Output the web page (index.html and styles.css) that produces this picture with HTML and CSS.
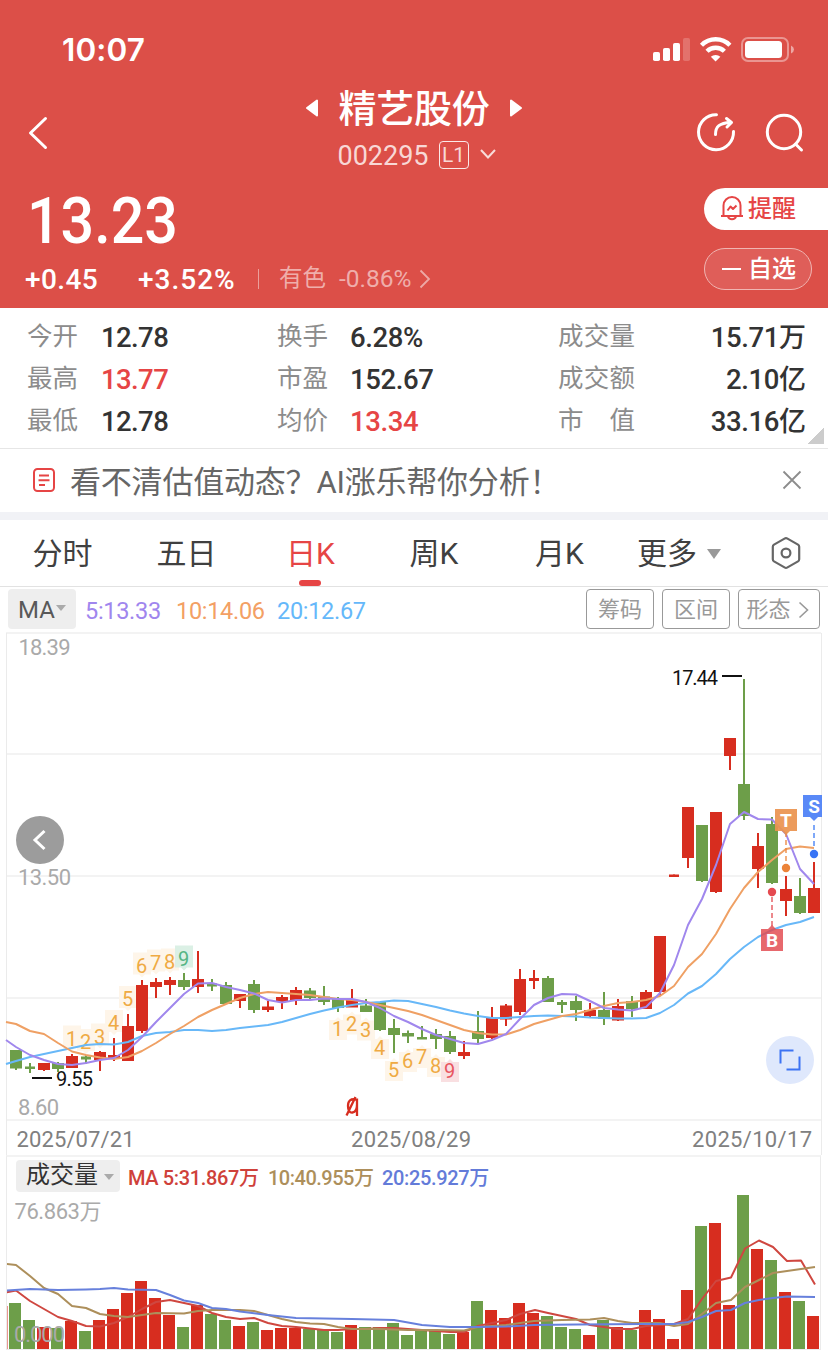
FILE: index.html
```html
<!DOCTYPE html>
<html lang="zh-CN">
<head>
<meta charset="utf-8">
<title>精艺股份 002295</title>
<link rel="stylesheet" href="styles.css">
</head>
<body>
<header class="hero">
  <div class="status">
    <span class="clock">10:07</span>
    <svg class="status-icons" width="144" height="28" viewBox="652 36 144 28">
      <g fill="#fff"><rect x="653" y="52" width="7" height="9" rx="1.8"/><rect x="663" y="48" width="7" height="13" rx="1.8"/><rect x="673" y="43" width="7" height="18" rx="1.8"/><rect x="683" y="38" width="7" height="23" rx="1.8" opacity=".2"/></g>
      <g fill="none" stroke="#fff" stroke-width="4.4"><path d="M701.5 45.2a20 20 0 0 1 28.400 0"/><path d="M707 51.300a12.400 12.400 0 0 1 17.400 0"/></g>
      <path d="M710.800 56.800a7.300 7.300 0 0 1 9.600 0L715.600 61.500z" fill="#fff"/>
      <rect x="742" y="38" width="46" height="23" rx="6" fill="none" stroke="#fff" stroke-opacity=".4" stroke-width="2"/>
      <rect x="745" y="41" width="37" height="17" rx="3.500" fill="#fff"/><path d="M791 45.500q3 1.500 3 4t-3 4z" fill="#fff" opacity=".5"/>
    </svg>
  </div>
  <div class="nav">
    <svg class="back" width="24" height="36" viewBox="28 115 24 36"><path d="M46.500 118.500L31.500 133L46.500 147.500" fill="none" stroke="#fff" stroke-width="3" stroke-linecap="round" stroke-linejoin="round"/></svg>
    <div class="name">
      <div class="name-line">
        <svg width="12" height="18" viewBox="0 0 12 18"><path d="M11 1.500v15L1 9z" fill="#fff" stroke="#fff" stroke-width="2" stroke-linejoin="round"/></svg>
        <h1>精艺股份</h1>
        <svg width="12" height="18" viewBox="0 0 12 18"><path d="M1 1.500v15L11 9z" fill="#fff" stroke="#fff" stroke-width="2" stroke-linejoin="round"/></svg>
      </div>
      <div class="code-line"><span class="code">002295</span><span class="level">L1</span>
        <svg width="16" height="12" viewBox="0 0 16 12"><path d="M1 2l7 7.500L15 2" fill="none" stroke="#f8dcda" stroke-width="2"/></svg></div>
    </div>
    <svg class="tools" width="108" height="42" viewBox="696 112 108 42" fill="none" stroke="#fff" stroke-width="3" stroke-linecap="round" stroke-linejoin="round">
      <path d="M716.500 114.700A17.500 17.500 0 1 0 733.500 131.500"/><path d="M715.500 134.500c0-8 4-11.500 15-12M726.500 118.500l5 4-4.500 4.500"/>
      <circle cx="784" cy="132" r="16.700"/><path d="M795.500 144l6 6"/>
    </svg>
  </div>
  <div class="quote">
    <div class="quote-main">
      <div class="price"><span>13.23</span></div>
      <div class="changes"><b class="chg">+0.45</b><b class="pct">+3.52%</b><i></i><span class="sector">有色</span><span class="sector-pct">-0.86%</span>
        <svg width="12" height="20" viewBox="0 0 12 20"><path d="M1.500 1.500L10 10L1.500 18.500" fill="none" stroke="#eda9a6" stroke-width="1.800"/></svg></div>
    </div>
    <div class="actions">
      <div class="alert"><svg width="24" height="26" viewBox="0 0 24 26" fill="none" stroke="#e64545" stroke-width="2" stroke-linejoin="round"><path d="M1 21h22M3.500 21V10.500a8.500 8.500 0 0 1 17 0V21M8 21.500c1 3.600 7 3.600 8 0"/><path d="M7.500 15.500l3-4 2.500 2.500 3.500-3.500"/></svg><span>提醒</span></div>
      <div class="watch"><i></i><span>自选</span></div>
    </div>
  </div>
</header>

<section class="stats">
  <dl><dt>今开</dt><dd>12.78</dd><dt>最高</dt><dd class="up">13.77</dd><dt>最低</dt><dd>12.78</dd></dl>
  <dl><dt>换手</dt><dd>6.28%</dd><dt>市盈</dt><dd>152.67</dd><dt>均价</dt><dd class="up">13.34</dd></dl>
  <dl class="last"><dt>成交量</dt><dd>15.71<em>万</em></dd><dt>成交额</dt><dd>2.10<em>亿</em></dd><dt>市　值</dt><dd>33.16<em>亿</em></dd></dl>
  <span class="corner"></span>
</section>

<section class="notice">
  <svg width="24" height="26" viewBox="0 0 24 26" fill="none" stroke="#e64545" stroke-width="2"><rect x="2" y="2" width="20" height="22" rx="3.500"/><path d="M7 8.500h10M6.500 13.200h11M7 18h6"/></svg>
  <span>看不清估值动态？AI涨乐帮你分析！</span>
  <svg class="close" width="20" height="20" viewBox="0 0 20 20"><path d="M1.500 1.500l17 17M18.500 1.500l-17 17" stroke="#8c8c8c" stroke-width="1.800"/></svg>
</section>

<nav class="tabs">
  <span>分时</span><span>五日</span><span class="active">日K</span><span>周K</span><span>月K</span><span class="more">更多<i class="caret"></i></span>
  <svg width="32" height="34" viewBox="0 0 32 34" fill="none" stroke="#666" stroke-width="2.200" stroke-linejoin="round"><path d="M14.500 2.600q1.500-.8 3 0L28 8.600q1.200.8 1.200 2.200v12.400q0 1.400-1.200 2.200l-10.500 6q-1.500.8-3 0L4 25.400q-1.200-.8-1.200-2.200V10.800Q2.800 9.400 4 8.600z"/><circle cx="16" cy="17" r="4.400"/></svg>
</nav>

<div class="indicators">
  <span class="select ma">MA<i class="caret"></i></span>
  <span class="n5">5:13.33</span><span class="n10">10:14.06</span><span class="n20">20:12.67</span>
  <div class="btns"><span>筹码</span><span>区间</span><span class="wide">形态<svg width="11" height="18" viewBox="0 0 11 18"><path d="M1.500 1.500L9.500 9l-8 7.500" fill="none" stroke="#999" stroke-width="1.600"/></svg></span></div>
</div>

<svg id="kline" class="kline" width="828" height="523" viewBox="0 632 828 523"></svg>

<section class="volume">
  <div class="volume-head"><span class="select vol">成交量<i class="caret"></i></span><span class="v5">MA 5:31.867万</span><span class="v10">10:40.955万</span><span class="v20">20:25.927万</span></div>
  <svg id="vol" width="813" height="157" viewBox="7 1193 813 157"></svg>
</section>
<script src="chart.js"></script>
</body>
</html>
```
FILE: styles.css
```css
* { box-sizing: border-box; }
body { margin: 0; width: 828px; height: 1360px; overflow: hidden; background: #fff; color: #333; font-family: Roboto, "Noto Sans CJK SC", sans-serif; }
svg { display: block; flex: none; }
i { font-style: normal; }

.hero { height: 308px; background: #dc4f48; color: #fff; }
.status { height: 80px; display: flex; justify-content: space-between; padding: 30px 32px 0 62px; }
.clock { font: 600 31.5px/40px Inter, sans-serif; letter-spacing: .1px; }
.status-icons { margin-top: 6px; }
.nav { height: 100px; display: flex; justify-content: space-between; padding: 0 24px 0 27px; }
.back { margin: 35px 81px 0 0; }
.tools { margin-top: 32px; }
.name { display: flex; flex-direction: column; align-items: center; }
.name-line { height: 56px; display: flex; align-items: center; gap: 20px; }
.name h1 { margin: 0; font: 500 38px/52px "Noto Sans CJK SC", sans-serif; letter-spacing: -.2px; height: 56px; }
.code-line { height: 38px; display: flex; align-items: center; color: #f8d8d6; margin-left: 5px; margin-top: -1px; }
.code { font-size: 27px; line-height: 38px; padding-top: 3px; }
.level { width: 30px; height: 28px; margin: 1px 11px 0 10px; border: 1.500px solid #fbe9e8; border-radius: 4px; font-size: 21px; line-height: 27px; text-align: center; font-weight: 400; }

.quote { height: 128px; display: flex; justify-content: space-between; }
.quote-main { padding-left: 25px; }
.price { height: 80px; font-size: 65px; font-weight: 500; line-height: 83px; padding-left: 2px; }
.price span { display: inline-block; transform: scaleX(.91); transform-origin: left; }
.changes { height: 40px; display: flex; align-items: center; font-size: 28px; line-height: 40px; }
.changes b { font-weight: 500; }
.chg { width: 113px; letter-spacing: .4px; }
.pct { width: 120px; letter-spacing: 1px; }
.changes i { width: 1px; height: 20px; background: #eb9f9b; margin: -2px 20px 0 0; }
.changes .sector { color: #efaeab; font-size: 23.500px; width: 60px; line-height: 36px; height: 40px; }
.changes .sector-pct { color: #efaeab; font-size: 24.500px; width: 80px; line-height: 37px; height: 40px; }
.changes svg { margin-top: -3px; }
.actions { display: flex; flex-direction: column; gap: 18px; padding-top: 8px; width: 124px; }
.alert, .watch { height: 42px; display: flex; align-items: center; font-size: 24px; font-weight: 500; }
.alert { border-radius: 21px 0 0 21px; background: #fff; color: #e64545; gap: 4px; padding-left: 16px; }
.alert svg { margin-top: -2px; }
.alert span, .watch span { line-height: 36px; padding-bottom: 1px; }
.watch { width: 108px; border: 1.500px solid #f0b5b2; border-radius: 21px; background: #df5e59; gap: 7px; padding-left: 17px; }
.watch i { width: 19px; height: 2px; background: #fff; }

.stats { position: relative; height: 140px; padding: 9px 23px 0 27px; display: flex; }
.stats dl { margin: 0; display: grid; grid-template-columns: 74px 176px; grid-auto-rows: 42px; }
.stats dl + dl { grid-template-columns: 73px 208px; }
.stats dl.last { grid-template-columns: 80px 168px; }
.stats dt { color: #8c8c8c; font-size: 25.500px; line-height: 39px; white-space: nowrap; }
.stats dd { margin: 0; color: #333; font-size: 27.500px; line-height: 42px; font-weight: 500; letter-spacing: -.6px; }
.stats dl + dl dd { letter-spacing: -.4px; }
.stats .last dt { letter-spacing: .3px; }
.stats .last dd { text-align: right; }
.stats em { font-style: normal; font-size: 27px; letter-spacing: 0; }
.stats .up { color: #e64545; }
.corner { position: absolute; right: 4px; bottom: 4px; width: 16px; height: 16px; background: linear-gradient(135deg, transparent 50%, #ccc 50%); }

.notice { height: 72px; display: flex; align-items: center; padding: 0 26px 2px 32px; border-top: 1px solid #e6e6e6; border-bottom: 8px solid #f1f2f6; color: #666; }
.notice span { margin-left: 14px; font-size: 31px; letter-spacing: -.2px; }
.notice .close { margin-left: auto; }

.tabs { height: 67px; border-bottom: 1px solid #e2e2e2; display: grid; grid-template-columns: 125px 123px 125px 122px 129px 146px 32px; font-size: 30px; line-height: 68px; color: #404040; align-items: center; text-align: center; }
.tabs span { height: 66px; }
.tabs .active { position: relative; color: #e64545; }
.active::after { content: ""; position: absolute; left: 51px; bottom: 0; width: 22px; height: 6px; border-radius: 3px; background: #e64545; }
.tabs .more { display: flex; align-items: center; gap: 10px; padding: 2px 0 0 13px; }
.caret { width: 0; height: 0; border: solid transparent; border-width: 10px 7px 0; border-top-color: #999; }

.indicators { height: 45px; display: flex; padding: 2px 8px 0; font-size: 24px; line-height: 42px; }
.select { display: flex; align-items: center; background: #eee; border-radius: 4px; color: #595959; }
.select .caret { border-width: 6px 5px 0; border-top-color: #aaa; }
.ma { width: 68px; height: 40px; padding: 2px 0 0 10px; margin-right: 9px; gap: 1px; }
.ma .caret { margin-top: -4px; }
.n5 { color: #a086ee; width: 91px; }
.n10 { color: #f3a064; width: 101px; }
.n20 { color: #65b8fa; }
.n5, .n10, .n20 { font-size: 23.500px; line-height: 44px; letter-spacing: -.3px; white-space: nowrap; }
.btns { margin-left: auto; display: flex; gap: 8px; }
.btns span { height: 40px; width: 68px; border: 1px solid #999; border-radius: 4px; color: #999; font-size: 22px; line-height: 40px; display: flex; align-items: center; justify-content: center; padding-top: 1px; }
.btns .wide { width: 82px; gap: 7px; padding-right: 3px; }

.kline { overflow: hidden; }
.volume { height: 195px; margin: 0 7px 0 6px; border: 1px solid #ebebeb; border-top: 2px solid #f3f3f3; }
.volume-head { height: 36px; padding-top: 2px; display: flex; align-items: center; font-size: 20px; font-weight: 500; letter-spacing: -.35px; white-space: nowrap; }
.vol { width: 104px; height: 32px; margin-left: 9px; margin-right: 8px; padding-left: 10px; gap: 6px; font-size: 24px; line-height: 28px; padding-bottom: 3px; font-weight: 400; letter-spacing: 0; color: #333; }
.vol .caret { margin-top: 4px; }
.v5 { color: #cf413a; width: 140px; }
.v10 { color: #ad8f5b; width: 114px; letter-spacing: -.5px; }
.v20 { color: #637bd9; }
```
FILE: chart.js
```js
const RED = '#d72d1f', GREEN = '#6d9e49';

// body top, body bottom, high, low, rising
const candles = [
  [1050,1068.500,1050,1070,0],[1066.500,1069,1063,1073,0],[1063,1070,1063,1071,1],[1063,1069,1062,1072,0],
  [1056,1068,1054,1068,1],[1056.500,1059.500,1055,1064,0],[1052,1060,1051,1071,1],[1055,1059,1038,1061,1],
  [1026,1061,1014,1061,1],[985,1031,980,1033,1],[982,987,978,998,1],[980,985,977,995,1],
  [980,987,973,990,0],[979,987,951,993,1],[983.500,986.500,979,991,0],[985,1004,982,1004,0],
  [994,1001,994,1008,1],[984,1010,980,1013,0],[1006.500,1010,1001,1012,1],[997,1002,995,1009,1],
  [990,1000,987,1005,1],[990.500,998,988,1000,0],[996.500,1002,986,1005,0],[998,1008,997,1012,0],
  [1000,1007.500,989,1007,1],[1005.500,1012,999,1012,0],[1002,1030,1002,1031,0],[1028,1035,1019,1053,0],
  [1033,1036.500,1030.500,1043,0],[1037,1039.500,1026,1039,0],[1034,1039,1029,1049,0],[1036,1052,1031,1054,0],
  [1052,1056,1041,1059,1],[1031,1039,1011,1043,0],[1018,1038,1007,1039,1],[1005.500,1019.500,1004,1026,1],
  [979,1012,969,1015,1],[978,981,970,989,1],[978,1002,976,1002,0],[1002,1005,1000,1013,0],
  [1001,1010,996,1021,0],[1010,1016,1003,1017,1],[1010,1019,992,1025,0],[1006,1020.500,999,1021,1],
  [1001,1009,996,1017,0],[992,1009,990,1009,1],[936,992,936,996,1],[874.500,877,874.500,877,1],
  [807,858,807,868,1],[825,881,825,882,0],[812,892,812,893,1],[738,756,738,770,1],
  [784,816,679,820,0],[846,869,833,888,1],[824,883,817,884,0],[889,901,876,916,1],
  [896,913,878,914,0],[888,913,862,913,1]
];

// first value sits on the left edge, the rest on the candle centres
const ma5 = [1040,1047,1055,1060,1064,1065,1063,1060,1058,1050,1037,1022,1008,994,983.5,983,987,990,993.5,1000,1002.5,1000,1000,998.5,999,999,1002,1008,1016,1022,1029,1035,1039,1043,1044,1040,1034,1019,1005,998,994,994.5,1001,1008,1009.5,1010.5,1007,993,965,925,899,865,824,812,819,819.5,834,869,884];
const ma10 = [1022,1024,1031,1034,1043,1051.5,1055,1057.5,1059,1057,1051,1043,1034,1026,1017,1010,1004,998,994,992,993,994,995,997,999,1000,1002,1005,1008,1011,1015,1020,1025,1030,1033,1034.5,1034.5,1030,1024,1020,1016,1014,1010,1006,1003,1002,1000,996,986,967,954,934,909,888,872,860,849,846.5,848];
const ma20 = [1064,1061,1057,1054,1051,1048,1045,1044,1044.5,1042,1036,1033,1032,1030,1030,1031,1030,1028,1026.5,1025,1022,1018,1014,1010.5,1007.5,1005,1003,1002,1000.5,1001,1004,1007,1010.5,1013.5,1016,1018,1018,1017,1016,1015.5,1016,1016.5,1017.5,1018,1018.5,1018.5,1018,1013,1005,993.5,986,974,959,947,937,930,925,922,917];

const volumes = [1303,1320,1327,1328,1321,1331,1320,1309,1293,1281,1298,1315,1327,1305,1314,1320,1326,1322,1330,1328,1328,1329,1330,1332,1325,1327,1327,1323,1335,1330,1330,1334,1332,1301,1310,1318,1303,1313,1316,1327,1329,1335,1320,1327,1330,1310,1319,1339,1290,1226,1223,1305,1195,1249,1260,1292,1301,1316];

const v5 = '6,1292.5 16,1290.5 30,1301 44,1309 58,1317 72,1321 86,1326 100,1326.5 114,1323 128,1317 142,1309 156,1302 170,1300 184,1303 198,1306 212,1313 226,1317 240,1319 254,1318 268,1323 282,1326 296,1327 310,1328.5 324,1330 338,1330 352,1329 366,1329 380,1328 394,1328 408,1329 422,1330 436,1331 450,1332 464,1332 478,1326 492,1323 506,1320 520,1314 535,1310 548,1313 562,1316 576,1319 590,1325 604,1327 618,1329 632,1329 646,1326 660,1325 674,1324 688,1319 702,1299 716,1281 731,1277.5 745,1248.5 759,1240.5 773,1247 787,1261 801,1260.5 815,1284.5';
const v10 = '6,1264 16,1265 30,1276 44,1288 58,1294 72,1306 86,1308 100,1314 114,1316 128,1317 142,1315 156,1313 184,1313.5 198,1311 212,1310 226,1310 240,1310 254,1311 268,1315 282,1319 296,1322 310,1323.5 324,1324 338,1327 352,1329 380,1329 408,1330 436,1330 464,1330.5 478,1327 506,1325 534,1321 562,1320 590,1319.5 604,1318 618,1321 632,1323 660,1323 674,1326 688,1324 702,1314 716,1303 731,1300 745,1287 759,1280 773,1273 787,1271 801,1269 815,1267';
const v20 = '6,1290.5 30,1289 58,1290 86,1289.5 100,1289 114,1288 128,1289.5 156,1290 170,1295 184,1300.5 198,1303 212,1308 226,1309 240,1311.5 268,1315 296,1318 352,1319 394,1320 422,1325 450,1327 478,1327 506,1326.5 534,1325 576,1324.5 646,1324 674,1324 688,1322 702,1317 716,1311 731,1310 745,1303 759,1300 773,1298 787,1296.5 815,1297';

const text = (x, y, s, size, fill, len, extra = '') =>
  `<text x="${x}" y="${y}" font-size="${size}" fill="${fill}" ${len ? `textLength="${len}"` : ''} ${extra}>${s}</text>`;
const line = (pts, color, w = 2) => `<polyline points="${pts}" fill="none" stroke="${color}" stroke-width="${w}" stroke-linejoin="round"/>`;
const average = (ys, color) => line(ys.map((y, i) => `${i ? 2 + 14 * i : 6},${y}`).join(' '), color);

let k = '';
for (const y of [633, 754, 876, 998, 1120]) k += `<path d="M6 ${y}H821" stroke="#f3f3f3" stroke-width="2"/>`;
k += '<path d="M6.500 633V1156M821.500 633V1156" stroke="#ebebeb"/>';
k += text(18.5, 655, '18.39', 22, '#aaa', 52) + text(18, 885, '13.50', 22, '#aaa', 53) + text(18, 1115, '8.60', 22, '#aaa', 41);

// nine-turn sequence counters: centre x, digit centre y, label
const above = [[72,1038.5,1],[86,1042,2],[100,1036.5,3],[114,1023,4],[128,999,5],[142,965.5,6],[156,962.5,7],[170,961.5,8],[184,958.5,9]];
const below = [[338,1029,1],[352,1023.5,2],[366,1029.5,3],[380,1048,4],[394,1070,5],[408,1061,6],[422,1057,7],[436,1066,8],[450,1071,9]];
for (const [x, y, n] of above) {
  const c = n === 9 ? ['#55b584', '#dbf0e5'] : ['#efaa43', '#fef5e9'];
  k += `<path d="M${x-9} ${y-13}h18v22h-6l-3 3l-3-3h-6z" fill="${c[1]}"/>` + text(x - .5, y + 7, n, 20, c[0], 0, 'text-anchor="middle"');
}
for (const [x, y, n] of below) {
  const c = n === 9 ? ['#e85560', '#f9dfe1'] : ['#efaa43', '#fef5e9'];
  k += `<path d="M${x-9} ${y-9}h6l3-3l3 3h6v20h-18z" fill="${c[1]}"/>` + text(x - .5, y + 7, n, 20, c[0], 0, 'text-anchor="middle"');
}

candles.forEach(([t, b, h, l, up], i) => {
  const x = 16 + 14 * i, w = b - t <= 3 ? 10 : 12;
  k += `<g fill="${up ? RED : GREEN}"><rect x="${x-1}" y="${h}" width="2" height="${l-h}"/><rect x="${x-w/2}" y="${t}" width="${w}" height="${b-t}"/></g>`;
});

k += text(672, 684.5, '17.44', 20, '#111', 46) + '<path d="M722 676h20M32 1078h20" stroke="#111" stroke-width="2"/>' + text(56, 1086, '9.55', 20, '#111', 37);
k += '<g fill="none" stroke="#d72d1f" stroke-width="2.300"><path d="M357 1098.500V1116M356 1099.500q-8-1.500-8 6.500q0 7 4.500 6.500q4.500-.5 4.500-8M346.500 1115.500l9-18.500"/></g>';

k += average(ma20, '#68b8f8') + average(ma10, '#efa064') + average(ma5, '#a087ed');

// trade markers
k += '<g stroke-width="2" stroke-dasharray="5 3" opacity=".65"><path d="M772 897v30" stroke="#e24a50"/><path d="M786 832v31" stroke="#ec8338"/><path d="M814 825v24" stroke="#3b7bf5"/></g>';
k += '<circle cx="772" cy="892" r="4.200" fill="#e54a50"/><circle cx="786" cy="868" r="4.200" fill="#ec8338"/><circle cx="814" cy="854" r="4.200" fill="#3874f5"/>';
k += '<path d="M761 929h7l4-4l4 4h7v22h-22z" fill="#e2494f" opacity=".83"/><path d="M775 809h22v22h-7l-4 4l-4-4h-7z" fill="#eb9350" opacity=".93"/><path d="M803 795h19v22h-4l-4 4l-4-4h-7z" fill="#4b7ff6" opacity=".92"/>';
k += '<g font-weight="700" text-anchor="middle" font-family="Roboto,sans-serif">' + text(772, 947, 'B', 19, '#fff') + text(786, 827, 'T', 19, '#fff') + text(814, 813, 'S', 19, '#fff') + '</g>';

k += text(16.5, 1147, '2025/07/21', 22, '#808080', 118) + text(351, 1147, '2025/08/29', 22, '#808080', 120) + text(692, 1147, '2025/10/17', 22, '#808080', 120);
k += '<circle cx="40" cy="840" r="24" fill="#9c9c9c"/><path d="M44.500 831l-9.500 9l9.500 9" fill="none" stroke="#fff" stroke-width="3"/>';
k += '<circle cx="790" cy="1060" r="24" fill="#dfe8fc"/><path d="M780.500 1063.500V1050.500h13M799.500 1056.500V1069.500h-13" fill="none" stroke="#3d73f3" stroke-width="2"/>';
document.getElementById('kline').innerHTML = k;

let v = `<rect x="6" y="1306" width="1.500" height="43" fill="${RED}"/>`;
volumes.forEach((y, i) => {
  const up = i === 20 || candles[i][4];
  v += `<rect x="${9 + 14 * i}" y="${y}" width="12" height="${1349 - y}" fill="${up ? RED : GREEN}"/>`;
});
v += line(v5, '#cf4740') + line(v10, '#ad8f5b') + line(v20, '#6780dc');
v += text(14.5, 1219, '76.863万', 22, '#aaa', 87) + text(14, 1342, '0.000', 22, '#aaa', 51);
document.getElementById('vol').innerHTML = v;
```
